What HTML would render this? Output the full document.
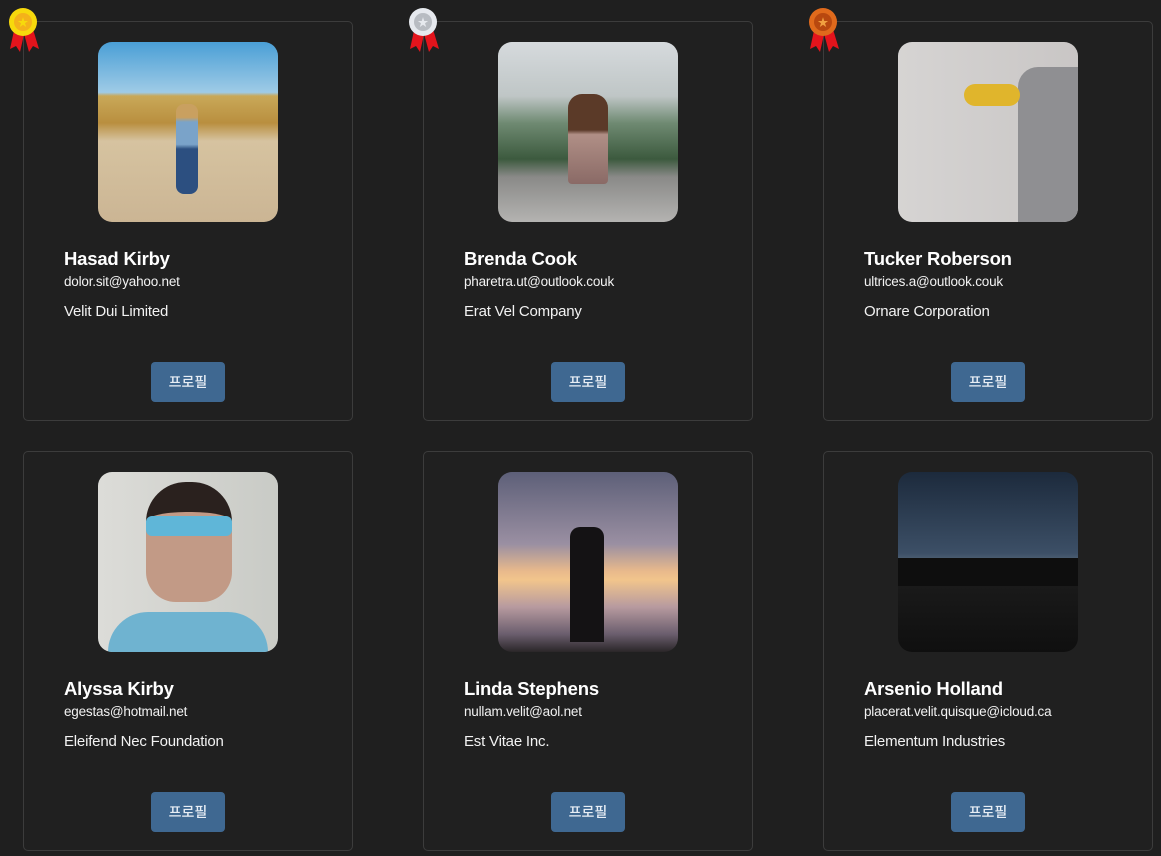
<!DOCTYPE html>
<html><head><meta charset="utf-8"><style>
*{margin:0;padding:0;box-sizing:border-box}
body{width:1161px;height:856px;background:#1f1f1f;font-family:"Liberation Sans","Noto Sans CJK KR",sans-serif;color:#fff;position:relative;overflow:hidden}
.card{position:absolute;width:330px;height:400px;border:1px solid #3c3c3c;border-radius:5px;background:#202020}
.img{position:absolute;left:74px;top:20px;width:180px;height:180px;border-radius:14px;overflow:hidden}
.name{position:absolute;left:40px;top:226px;font-size:18.5px;font-weight:bold;letter-spacing:-0.2px}
.mail{position:absolute;left:40px;top:252px;font-size:13.5px;letter-spacing:-0.2px;color:#f2f2f2}
.comp{position:absolute;left:40px;top:281px;font-size:15px;letter-spacing:-0.2px;color:#f2f2f2}
.btn{position:absolute;left:127px;top:340px;width:74px;height:40px;border-radius:4px;background:#3f6891;color:#e8eef5;font-size:14px;text-align:center;line-height:40px;font-weight:500}
.medal{position:absolute;width:32px;height:46px}
</style></head><body>

<div class="card" style="left:23px;top:21px">
 <div class="img" style="background:linear-gradient(#4a9fd6 0%,#9fcbe6 28%,#c9a858 30%,#b98f3f 45%,#d6c3a0 55%,#cbb594 100%)">
  <div style="position:absolute;left:78px;top:62px;width:22px;height:90px;background:linear-gradient(#c9a060 0,#c9a060 15%,#7aa3c9 20%,#7aa3c9 45%,#2c4f80 50%,#2c4f80 100%);border-radius:8px"></div>
 </div>
 <div class="name">Hasad Kirby</div><div class="mail">dolor.sit@yahoo.net</div><div class="comp">Velit Dui Limited</div><div class="btn">프로필</div>
</div>
<div class="card" style="left:423px;top:21px">
 <div class="img" style="background:linear-gradient(#d6dadd 0%,#bfc6c6 30%,#6f8a72 45%,#3c5a3e 65%,#8a8a88 75%,#b4b3b1 100%)">
  <div style="position:absolute;left:70px;top:52px;width:40px;height:90px;background:linear-gradient(#5b3a28 0,#5b3a28 40%,#b08f86 45%,#8a6a66 100%);border-radius:14px 14px 4px 4px"></div>
 </div>
 <div class="name">Brenda Cook</div><div class="mail">pharetra.ut@outlook.couk</div><div class="comp">Erat Vel Company</div><div class="btn">프로필</div>
</div>
<div class="card" style="left:823px;top:21px">
 <div class="img" style="background:linear-gradient(90deg,#d6d4d3,#c9c6c5)">
  <div style="position:absolute;left:120px;top:25px;width:60px;height:155px;background:#8f8f92;border-radius:20px 0 0 0"></div>
  <div style="position:absolute;left:66px;top:42px;width:56px;height:22px;background:#e0b52c;border-radius:12px"></div>
 </div>
 <div class="name">Tucker Roberson</div><div class="mail">ultrices.a@outlook.couk</div><div class="comp">Ornare Corporation</div><div class="btn">프로필</div>
</div>

<div class="card" style="left:23px;top:451px">
 <div class="img" style="background:linear-gradient(90deg,#dcdcd8,#c9cbc6)">
  <div style="position:absolute;left:48px;top:10px;width:86px;height:120px;background:#c29a86;border-radius:40px 40px 30px 30px;border-top:30px solid #2a211e"></div>
  <div style="position:absolute;left:48px;top:44px;width:86px;height:20px;background:#5fb6d8;border-radius:6px"></div>
  <div style="position:absolute;left:10px;top:140px;width:160px;height:50px;background:#6fb3d0;border-radius:40px 40px 0 0"></div>
 </div>
 <div class="name">Alyssa Kirby</div><div class="mail">egestas@hotmail.net</div><div class="comp">Eleifend Nec Foundation</div><div class="btn">프로필</div>
</div>
<div class="card" style="left:423px;top:451px">
 <div class="img" style="background:linear-gradient(#5d5f78 0%,#9a8fa2 40%,#e8b98c 55%,#f1c58c 60%,#b79a9f 75%,#6b5e6e 90%,#2a2628 100%)">
  <div style="position:absolute;left:72px;top:55px;width:34px;height:115px;background:#141214;border-radius:10px 10px 0 0"></div>
 </div>
 <div class="name">Linda Stephens</div><div class="mail">nullam.velit@aol.net</div><div class="comp">Est Vitae Inc.</div><div class="btn">프로필</div>
</div>
<div class="card" style="left:823px;top:451px">
 <div class="img" style="background:linear-gradient(#1c2a3c 0%,#3c4f66 45%,#6b7a88 55%,#1a1a1a 63%,#0f0f0f 100%)">
  <div style="position:absolute;left:0;top:86px;width:180px;height:28px;background:#0e0e0e"></div>
 </div>
 <div class="name">Arsenio Holland</div><div class="mail">placerat.velit.quisque@icloud.ca</div><div class="comp">Elementum Industries</div><div class="btn">프로필</div>
</div>

<svg class="medal" style="left:8px;top:6px" viewBox="0 0 32 46"><path d="M7 20 L2 43 L8 40 L12 46 L17 24Z M24 20 L31 43 L25 40 L21 46 L15 24Z" fill="#e3141c"/><circle cx="15" cy="16" r="14" fill="#f7d90c"/><circle cx="15" cy="16" r="9" fill="#f4b21a"/><text x="15" y="20" font-size="11" text-anchor="middle" fill="#f7d90c">★</text></svg>
<svg class="medal" style="left:408px;top:6px" viewBox="0 0 32 46"><path d="M7 20 L2 43 L8 40 L12 46 L17 24Z M24 20 L31 43 L25 40 L21 46 L15 24Z" fill="#e3141c"/><circle cx="15" cy="16" r="14" fill="#e6e9ee"/><circle cx="15" cy="16" r="9" fill="#b8bcc2"/><text x="15" y="20" font-size="11" text-anchor="middle" fill="#e6e9ee">★</text></svg>
<svg class="medal" style="left:808px;top:6px" viewBox="0 0 32 46"><path d="M7 20 L2 43 L8 40 L12 46 L17 24Z M24 20 L31 43 L25 40 L21 46 L15 24Z" fill="#e3141c"/><circle cx="15" cy="16" r="14" fill="#e06a1c"/><circle cx="15" cy="16" r="9" fill="#b8480f"/><text x="15" y="20" font-size="11" text-anchor="middle" fill="#f0a040">★</text></svg>
</body></html>
